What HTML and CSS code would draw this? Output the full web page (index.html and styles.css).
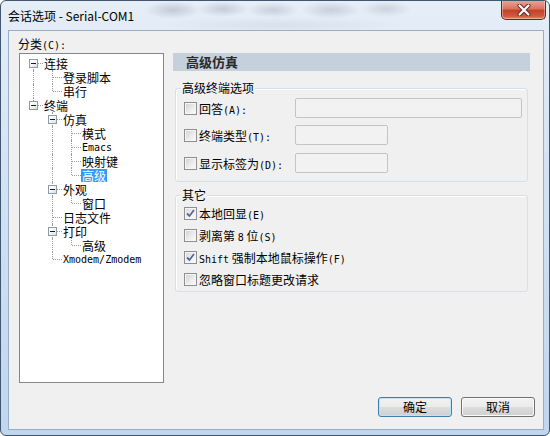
FILE: index.html
```html
<!DOCTYPE html>
<html lang="zh-CN">
<head>
<meta charset="utf-8">
<title>会话选项 - Serial-COM1</title>
<link rel="stylesheet" href="styles.css">
</head>
<body>
<div class="window">
  <div class="titlebar">
    <span class="title">会话选项 - Serial-COM1</span>
    <button class="close" aria-label="关闭">
      <svg width="14" height="12" viewBox="0 0 14 12">
        <path d="M2.5 1.5 L11.5 10.5 M11.5 1.5 L2.5 10.5" stroke="#5a2a22" stroke-width="4" stroke-linecap="round"/>
        <path d="M2.5 1.5 L11.5 10.5 M11.5 1.5 L2.5 10.5" stroke="#ffffff" stroke-width="2.2" stroke-linecap="round"/>
      </svg>
    </button>
  </div>
  <div class="client">
    <div class="main">
      <div class="left">
        <div class="cat-label">分类<span class="m">(C):</span></div>
        <div class="tree">
          <div class="row"><span class="c f"><span class="exp"></span></span><span class="txt">连接</span></div>
          <div class="row"><span class="c v"></span><span class="c t"></span><span class="txt">登录脚本</span></div>
          <div class="row"><span class="c v"></span><span class="c l"></span><span class="txt">串行</span></div>
          <div class="row"><span class="c l"><span class="exp"></span></span><span class="txt">终端</span></div>
          <div class="row"><span class="c"></span><span class="c t"><span class="exp"></span></span><span class="txt">仿真</span></div>
          <div class="row"><span class="c"></span><span class="c v"></span><span class="c t"></span><span class="txt">模式</span></div>
          <div class="row"><span class="c"></span><span class="c v"></span><span class="c t"></span><span class="txt m">Emacs</span></div>
          <div class="row"><span class="c"></span><span class="c v"></span><span class="c t"></span><span class="txt">映射键</span></div>
          <div class="row"><span class="c"></span><span class="c v"></span><span class="c l"></span><span class="txt sel">高级</span></div>
          <div class="row"><span class="c"></span><span class="c t"><span class="exp"></span></span><span class="txt">外观</span></div>
          <div class="row"><span class="c"></span><span class="c v"></span><span class="c l"></span><span class="txt">窗口</span></div>
          <div class="row"><span class="c"></span><span class="c t"></span><span class="txt">日志文件</span></div>
          <div class="row"><span class="c"></span><span class="c t"><span class="exp"></span></span><span class="txt">打印</span></div>
          <div class="row"><span class="c"></span><span class="c v"></span><span class="c l"></span><span class="txt">高级</span></div>
          <div class="row"><span class="c"></span><span class="c l"></span><span class="txt m">Xmodem/Zmodem</span></div>
        </div>
      </div>
      <div class="right">
        <div class="header">高级仿真</div>
        <div class="group g1">
          <div class="legend">高级终端选项</div>
          <div class="frow"><span class="chk"><span class="cb"></span><span>回答<span class="m">(A):</span></span></span><span class="inp wide"></span></div>
          <div class="frow"><span class="chk"><span class="cb"></span><span>终端类型<span class="m">(T):</span></span></span><span class="inp"></span></div>
          <div class="frow r3"><span class="chk"><span class="cb"></span><span>显示标签为<span class="m">(D):</span></span></span><span class="inp"></span></div>
        </div>
        <div class="group g2">
          <div class="legend">其它</div>
          <div class="crow"><span class="cb on"><svg width="11" height="11" viewBox="0 0 11 11"><path d="M2 5.5 L4.5 8 L9 2" fill="none" stroke="#5568a6" stroke-width="1.8"/></svg></span><span class="lbl">本地回显<span class="m">(E)</span></span></div>
          <div class="crow"><span class="cb"></span><span class="lbl">剥离第 <span class="m">8</span> 位<span class="m">(S)</span></span></div>
          <div class="crow"><span class="cb on"><svg width="11" height="11" viewBox="0 0 11 11"><path d="M2 5.5 L4.5 8 L9 2" fill="none" stroke="#5568a6" stroke-width="1.8"/></svg></span><span class="lbl"><span class="m">Shift</span> 强制本地鼠标操作<span class="m">(F)</span></span></div>
          <div class="crow"><span class="cb"></span><span class="lbl">忽略窗口标题更改请求</span></div>
        </div>
      </div>
    </div>
    <div class="buttons">
      <button class="btn default">确定</button>
      <button class="btn">取消</button>
    </div>
  </div>
</div>
</body>
</html>
```

FILE: styles.css
```css
* { box-sizing: border-box; }
html, body { margin: 0; padding: 0; }
body {
  width: 550px;
  height: 436px;
  overflow: hidden;
  font-family: "Noto Sans CJK SC", "Noto Sans", sans-serif;
  font-size: 12px;
  color: #000;
  background: #ffffff;
}
.window {
  width: 550px;
  height: 436px;
  border: 1px solid #40576f;
  border-radius: 6px;
  background: linear-gradient(to bottom, #e6eef7 0%, #d3e3f3 40%, #bfd6ef 100%);
  display: flex;
  flex-direction: column;
  overflow: hidden;
}
.titlebar {
  height: 29px;
  flex: none;
  display: flex;
  align-items: center;
  padding-left: 7px;
  background:
    radial-gradient(ellipse 28px 9px at 172px 9px, rgba(110,120,135,.3), transparent),
    radial-gradient(ellipse 26px 8px at 222px 8px, rgba(110,120,135,.28), transparent),
    radial-gradient(ellipse 26px 8px at 272px 9px, rgba(110,120,135,.25), transparent),
    radial-gradient(ellipse 30px 9px at 330px 9px, rgba(110,120,135,.25), transparent),
    radial-gradient(ellipse 26px 8px at 385px 8px, rgba(110,120,135,.22), transparent),
    radial-gradient(ellipse 120px 8px at 280px 24px, rgba(150,160,170,.15), transparent);
}
.title {
  line-height: 16px;
  white-space: nowrap;
}
.close {
  margin-left: auto;
  margin-right: 3px;
  margin-top: -1px;
  align-self: flex-start;
  width: 45px;
  height: 20px;
  padding: 0;
  border: 1px solid #5b2a22;
  border-top: none;
  border-radius: 0 0 5px 5px;
  background: linear-gradient(to bottom, #e9a99c 0%, #d9755f 45%, #c4422a 55%, #d05a3f 85%, #e28a6e 100%);
  box-shadow: inset 0 0 0 1px rgba(255,255,255,.35);
  display: flex;
  align-items: center;
  justify-content: center;
}
.client {
  margin-left: 7px;
  width: 536px;
  height: 400px;
  flex: none;
  border: 1px solid #99aec6;
  background: #f0f0f0;
  display: flex;
  flex-direction: column;
}
.m {
  font-family: "DejaVu Sans Mono", "Liberation Mono", monospace;
  font-size: 10px;
}
.main {
  height: 352px;
  padding: 6px 0 0 9px;
  display: flex;
  gap: 9px;
}
.left {
  width: 146px;
  flex: none;
  display: flex;
  flex-direction: column;
}
.cat-label {
  line-height: 14px;
  height: 14px;
  margin-bottom: 2px;
}
.tree {
  margin-left: 1px;
  width: 145px;
  height: 330px;
  border: 1px solid #828790;
  background: #fff;
  padding: 2px 0 0 4px;
}
.row {
  display: flex;
  height: 14px;
  align-items: center;
}
.c {
  width: 19px;
  height: 14px;
  flex: none;
  position: relative;
}
.c::before, .c::after {
  content: "";
  position: absolute;
}
.v::before, .t::before {
  left: 9px; top: 0; bottom: 0;
  border-left: 1px dotted #9a9a9a;
}
.l::before {
  left: 9px; top: 0; height: 7px;
  border-left: 1px dotted #9a9a9a;
}
.f::before {
  left: 9px; top: 7px; bottom: 0;
  border-left: 1px dotted #9a9a9a;
}
.t::after, .l::after, .f::after {
  left: 10px; right: 0; top: 7px;
  border-top: 1px dotted #9a9a9a;
}
.exp {
  position: absolute;
  left: 5px;
  top: 3px;
  width: 9px;
  height: 9px;
  border: 1px solid #8e9aa8;
  background: linear-gradient(135deg, #ffffff 30%, #d8dde4 100%);
  z-index: 1;
}
.exp::after {
  content: "";
  position: absolute;
  left: 1px;
  top: 3px;
  width: 5px;
  height: 1px;
  background: #1c1c1c;
}
.txt {
  padding: 0 1px;
  line-height: 13px;
  height: 13px;
  white-space: nowrap;
}
.sel {
  background: #3399ff;
  color: #fff;
}
.right {
  width: 357px;
  flex: none;
  display: flex;
  flex-direction: column;
}
.header {
  margin-top: 16px;
  height: 18px;
  line-height: 18px;
  background: #c4d0dc;
  padding-left: 13px;
  font-size: 13px;
  font-weight: bold;
  color: #2a2a2a;
}
.group {
  margin: 0 2px;
  border: 1px solid #d5dfe5;
  border-radius: 3px;
  box-shadow: inset 1px 1px 0 #fff;
  display: flex;
  flex-direction: column;
  padding: 0 0 0 8px;
}
.g1 { margin-top: 17px; padding-bottom: 8px; }
.g2 { margin-top: 13px; padding-bottom: 1px; }
.legend {
  align-self: flex-start;
  margin: -8px 0 0 -3px;
  padding: 0 1px;
  line-height: 14px;
  height: 14px;
  background: #f0f0f0;
}
.frow {
  display: flex;
  align-items: center;
  height: 20px;
  margin-top: 7px;
}
.g1 .legend + .frow { margin-top: 3px; }
.frow.r3 { margin-top: 8px; }
.chk {
  width: 111px;
  flex: none;
  display: flex;
  align-items: center;
  white-space: nowrap;
}
.cb {
  width: 13px;
  height: 13px;
  flex: none;
  border: 1px solid #8f8f8f;
  background: linear-gradient(135deg, #cfcfcf 0%, #eeeeee 60%, #fbfbfb 100%);
  box-shadow: inset 0 0 0 1px #f6f6f6;
  margin-right: 2px;
  display: flex;
  align-items: center;
  justify-content: center;
}
.cb.on {
  background: linear-gradient(135deg, #d6d6d6 0%, #f2f2f2 60%, #fdfdfd 100%);
}
.inp {
  width: 93px;
  height: 20px;
  border: 1px solid #c4c4c4;
  border-radius: 2px;
  background: #f2f2f2;
}
.inp.wide { width: 227px; }
.crow {
  display: flex;
  align-items: center;
  height: 22px;
  white-space: nowrap;
}
.lbl {
  white-space: pre;
}
.buttons {
  margin-top: 14px;
  display: flex;
  justify-content: flex-end;
  gap: 9px;
  padding-right: 8px;
}
.btn {
  width: 74px;
  height: 20px;
  padding: 0;
  border: 1px solid #707070;
  border-radius: 3px;
  background: linear-gradient(to bottom, #f2f2f2 0%, #ebebeb 50%, #dddddd 51%, #cfcfcf 100%);
  box-shadow: inset 0 0 0 1px #fbfbfb;
  font-family: "Noto Sans CJK SC", sans-serif;
  font-size: 12px;
  line-height: 18px;
  color: #000;
}
.btn.default {
  border-color: #3c7fb1;
  box-shadow: inset 0 0 0 1px #bde4f8;
}
```
